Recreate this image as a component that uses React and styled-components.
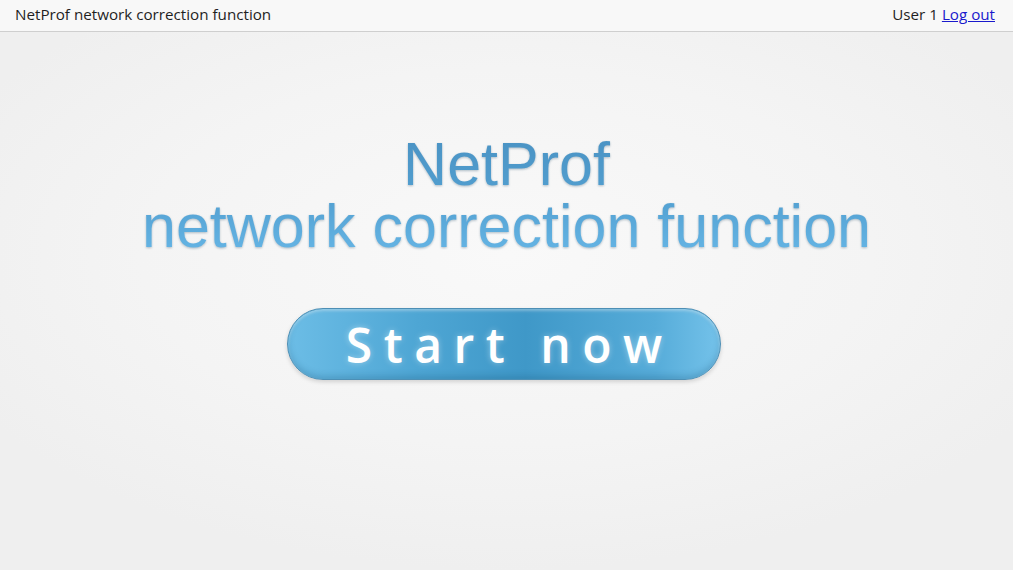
import React from "react";
import styled, { createGlobalStyle } from "styled-components";

const Global = createGlobalStyle`
  html, body { margin: 0; padding: 0; height: 100%; }
  body { background: #f1f1f1; }
  #root { min-height: 100vh; }
`;

const Page = styled.div`
  min-height: 100vh;
  display: flex;
  flex-direction: column;
  background: radial-gradient(ellipse 60% 55% at 50% 45%, #f9f9f9 0%, #f4f4f4 60%, #efefef 100%);
  font-family: "Open Sans", "Noto Sans", sans-serif;
`;

const TopBar = styled.header`
  height: 32px;
  box-sizing: border-box;
  display: flex;
  align-items: center;
  justify-content: space-between;
  padding: 0 18px 3px 15px;
  background: #f8f8f8;
  border-bottom: 1px solid #cfcfcf;
  font-size: 15.2px;
  color: #1f1f1f;
`;

const AppName = styled.span``;

const UserBox = styled.div`
  display: flex;
  gap: 4px;
`;

const LogOut = styled.a`
  color: #1a1acc;
  text-decoration: underline;
  cursor: pointer;
`;

const Hero = styled.main`
  flex: 1;
  display: flex;
  flex-direction: column;
  align-items: center;
  padding-top: 101px;
`;

const Title = styled.h1`
  margin: 0;
  font-family: "Liberation Sans", Arial, sans-serif;
  font-weight: 400;
  font-size: 61px;
  line-height: 62px;
  text-align: center;
  background: linear-gradient(180deg, #4a92c3 0%, #529fd0 50%, #66b6e6 100%);
  -webkit-background-clip: text;
  background-clip: text;
  color: transparent;
  filter: drop-shadow(0 1px 1px rgba(40, 80, 110, 0.35));
`;

const TitleLine = styled.span`
  display: block;
`;

const StartButton = styled.button`
  margin: 51px 5px 0 0;
  width: 434px;
  height: 72px;
  border-radius: 36px;
  border: 1px solid #4d8fb5;
  background: linear-gradient(90deg, #6cbde6 0%, #4ea6d4 30%, #3f98c8 55%, #56acd9 85%, #74c2ea 100%);
  box-shadow: inset 0 2px 3px rgba(255, 255, 255, 0.35), inset 0 -3px 6px rgba(20, 80, 120, 0.25),
    0 2px 4px rgba(0, 0, 0, 0.15);
  color: #ffffff;
  font-family: "Open Sans", "Noto Sans", sans-serif;
  font-weight: 600;
  font-size: 48px;
  letter-spacing: 11.5px;
  padding: 0 0 0 11.5px;
  cursor: pointer;
  text-shadow: 0 0 6px rgba(255, 255, 255, 0.4);
`;

export default function App() {
  return (
    <>
      <Global />
      <Page>
        <TopBar>
          <AppName>NetProf network correction function</AppName>
          <UserBox>
            <span>User 1</span>
            <LogOut>Log out</LogOut>
          </UserBox>
        </TopBar>
        <Hero>
          <Title>
            <TitleLine>NetProf</TitleLine>
            <TitleLine>network correction function</TitleLine>
          </Title>
          <StartButton>Start now</StartButton>
        </Hero>
      </Page>
    </>
  );
}
